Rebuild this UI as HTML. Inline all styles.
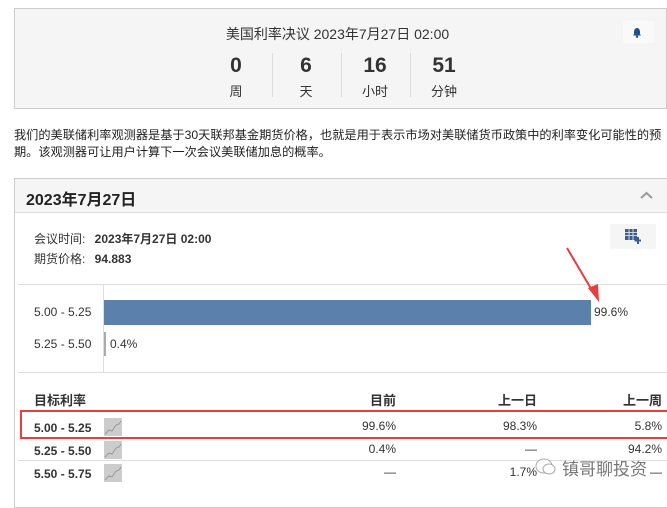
<!DOCTYPE html>
<html><head><meta charset="utf-8"><style>
*{margin:0;padding:0;box-sizing:border-box}
body{width:667px;height:497px;background:#fff;font-family:"Liberation Sans","Noto Sans CJK SC",sans-serif;color:#333;position:relative;overflow:hidden}
.a{position:absolute;white-space:nowrap}
.top{left:14px;top:8px;width:653px;height:101px;border:1px solid #ccc;background:#f5f5f5}
.num{font-size:21px;font-weight:bold;width:60px;text-align:center;top:54px;color:#333}
.lab{font-size:13px;width:60px;text-align:center;top:81px;color:#333}
.dv{width:1px;height:44px;background:#ddd;top:53px}
.tr{font-size:12px;line-height:16px}
.b{font-weight:bold}
</style></head><body>
<div class="a top"></div>
<div class="a" style="left:0;width:667px;top:24px;text-align:center;font-size:14px;padding-left:8px">美国利率决议 2023年7月27日 02:00</div>
<div class="a" style="left:623px;top:21px;width:31px;height:22px;background:#f9f9f9"></div>
<svg class="a" style="left:632px;top:27px" width="10" height="11" viewBox="0 0 10 11"><path d="M5 1C3 1 2 3 2 5V7L1 8.5H9L8 7V5C8 3 7 1 5 1Z" fill="#1d4f91"/><circle cx="5" cy="9.7" r="1.2" fill="#1d4f91"/></svg>
<div class="a num" style="left:206px">0</div><div class="a lab" style="left:206px">周</div>
<div class="a dv" style="left:272px"></div>
<div class="a num" style="left:276px">6</div><div class="a lab" style="left:276px">天</div>
<div class="a dv" style="left:341px"></div>
<div class="a num" style="left:345px">16</div><div class="a lab" style="left:345px">小时</div>
<div class="a dv" style="left:410px"></div>
<div class="a num" style="left:414px">51</div><div class="a lab" style="left:414px">分钟</div>

<div class="a" style="left:14px;top:127px;font-size:12.2px;line-height:17px;color:#222">我们的美联储利率观测器是基于30天联邦基金期货价格，也就是用于表示市场对美联储货币政策中的利率变化可能性的预<br>期。该观测器可让用户计算下一次会议美联储加息的概率。</div>

<div class="a" style="left:14px;top:178px;width:660px;height:330px;border:1px solid #ccc"></div>
<div class="a" style="left:15px;top:179px;width:652px;height:34px;background:#f5f5f5;border-bottom:1px solid #ddd"></div>
<div class="a b" style="left:26px;top:186px;font-size:16px;color:#222">2023年7月27日</div>
<svg class="a" style="left:640px;top:191px" width="13" height="9"><path d="M1 7L6.5 2L12 7" stroke="#999" stroke-width="2" fill="none"/></svg>
<div class="a tr" style="left:34px;top:231px">会议时间: <span class="b" style="margin-left:6px">2023年7月27日 02:00</span></div>
<div class="a tr" style="left:34px;top:251px">期货价格: <span class="b" style="margin-left:6px">94.883</span></div>
<div class="a" style="left:610px;top:224px;width:46px;height:25px;background:#f5f5f5"></div>
<svg class="a" style="left:625px;top:229px" width="16" height="15"><rect x="0" y="0" width="12" height="11" fill="#3b5f8a"/><path d="M0 3.5H12M0 6.5H12M4 0V11M8 0V11" stroke="#f5f5f5" stroke-width="0.8"/><path d="M13 8V15M9.5 11.5H16.5" stroke="#3b5f8a" stroke-width="2"/></svg>
<div class="a" style="left:18px;top:284px;width:649px;height:1px;background:#ddd"></div>
<div class="a" style="left:103px;top:285px;width:1px;height:87px;background:#ddd"></div>
<div class="a" style="left:18px;top:372px;width:649px;height:1px;background:#ddd"></div>
<div class="a tr" style="left:34px;top:304px">5.00 - 5.25</div>
<div class="a" style="left:104px;top:300px;width:487px;height:25px;background:#5b80ab"></div>
<div class="a tr" style="left:594px;top:304px">99.6%</div>
<div class="a tr" style="left:34px;top:336px">5.25 - 5.50</div>
<div class="a" style="left:104px;top:332px;width:2px;height:24px;background:#aaa"></div>
<div class="a tr" style="left:110px;top:336px">0.4%</div>
<svg class="a" style="left:560px;top:244px" width="45" height="62"><path d="M7 4L33 48" stroke="#e53f3f" stroke-width="2"/><path d="M28 44L39 58L38 40Z" fill="#e53f3f"/></svg>

<div class="a tr b" style="left:34px;top:393px;font-size:13px">目标利率</div>
<div class="a tr b" style="right:271px;top:393px;font-size:13px">目前</div>
<div class="a tr b" style="right:130px;top:393px;font-size:13px">上一日</div>
<div class="a tr b" style="right:5px;top:393px;font-size:13px">上一周</div>
<div class="a" style="left:20px;top:410px;width:650px;height:29px;border:2px solid #e53f3f"></div>
<div class="a" style="left:18px;top:460px;width:649px;height:1px;background:#ddd"></div>
<div class="a tr b" style="left:34px;top:420px">5.00 - 5.25</div>
<div class="a tr" style="right:271px;top:418px">99.6%</div>
<div class="a tr" style="right:130px;top:418px">98.3%</div>
<div class="a tr" style="right:5px;top:418px">5.8%</div>
<div class="a tr b" style="left:34px;top:443px">5.25 - 5.50</div>
<div class="a tr" style="right:271px;top:441px">0.4%</div>
<div class="a tr" style="right:130px;top:441px">—</div>
<div class="a tr" style="right:5px;top:441px">94.2%</div>
<div class="a tr b" style="left:34px;top:466px">5.50 - 5.75</div>
<div class="a tr" style="right:271px;top:464px">—</div>
<div class="a tr" style="right:130px;top:464px">1.7%</div>
<div class="a tr" style="right:5px;top:464px">—</div>
<svg class="a" style="left:104px;top:418px" width="18" height="18"><rect width="18" height="18" fill="#ccc"/><path d="M1 16L5 12L8 13L12 7L15 6L17 3" stroke="#999" fill="none"/></svg>
<svg class="a" style="left:104px;top:441px" width="18" height="18"><rect width="18" height="18" fill="#ccc"/><path d="M1 16L5 12L8 13L12 7L15 6L17 3" stroke="#999" fill="none"/></svg>
<svg class="a" style="left:104px;top:464px" width="18" height="18"><rect width="18" height="18" fill="#ccc"/><path d="M1 16L5 12L8 13L12 7L15 6L17 3" stroke="#999" fill="none"/></svg>
<svg class="a" style="left:535px;top:457px" width="22" height="20"><ellipse cx="9" cy="9" rx="8" ry="7" fill="#fff" stroke="#aaa"/><ellipse cx="14" cy="12" rx="6" ry="5" fill="#fff" stroke="#aaa"/></svg>
<div class="a" style="left:562px;top:455px;font-size:17px;color:#777;text-shadow:0 0 2px #fff">镇哥聊投资</div>
</body></html>
